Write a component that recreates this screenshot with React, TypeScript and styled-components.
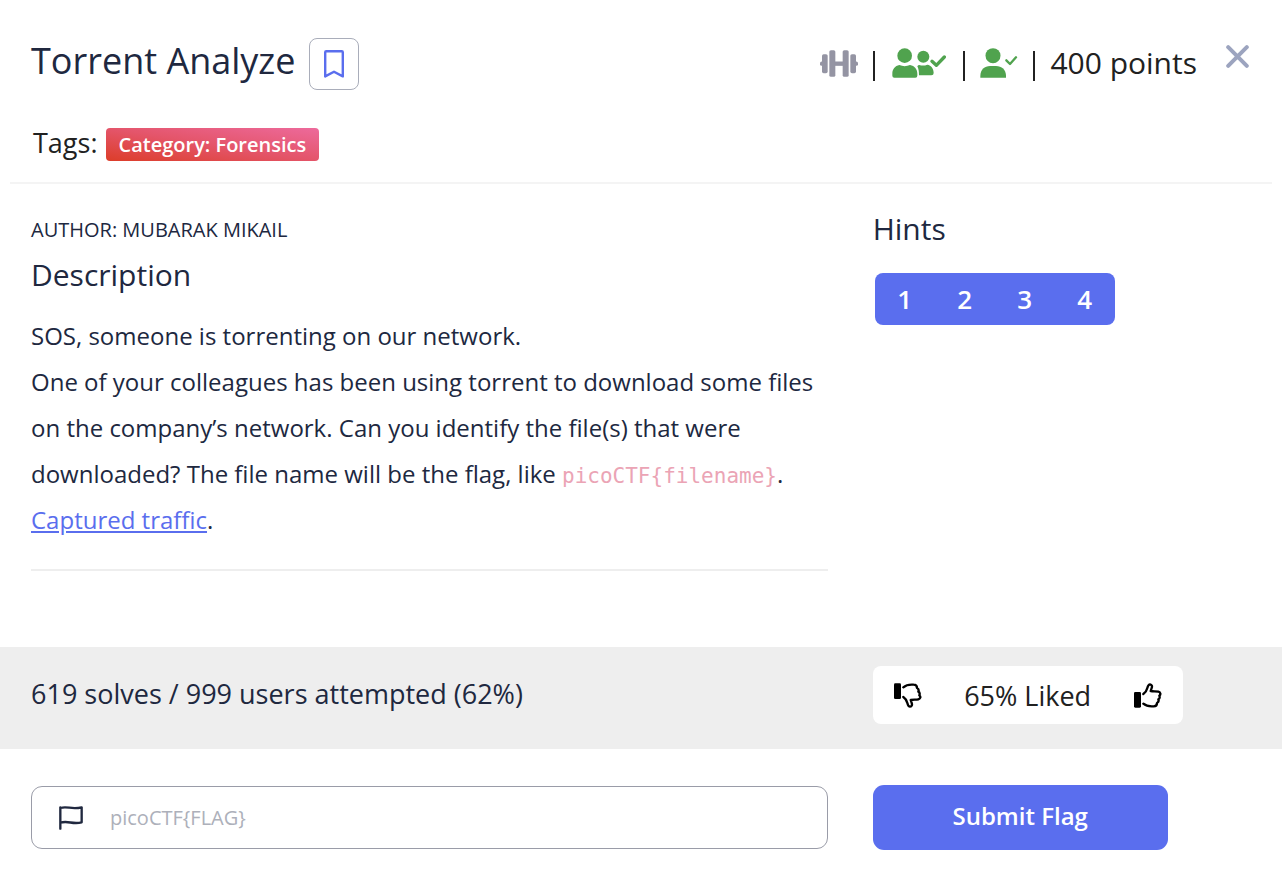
import React, { useState } from "react";
import styled, { createGlobalStyle } from "styled-components";

const color = {
  ink: "#20283f",
  text: "#212121",
  blue: "#5a6eee",
  green: "#50a34e",
  slate: "#9494a3",
  close: "#9ca4bf",
  rule: "#eeeeee",
};

const GlobalStyle = createGlobalStyle`
  *, *::before, *::after { box-sizing: border-box; }
  body {
    margin: 0;
    background: #fff;
    color: ${color.ink};
    font-family: "Open Sans", "Noto Sans", sans-serif;
    font-size: 24px;
  }
  button, input { font: inherit; }
  svg { display: block; }
`;

const Header = styled.header`
  display: flex;
  flex-direction: column;
  gap: 38px;
  margin: 0 10px;
  padding: 38px 21px 21px;
  border-bottom: 2px solid #f4f4f4;
`;

const HeaderRow = styled.div`
  display: flex;
  align-items: flex-start;
  justify-content: space-between;
`;

const TitleGroup = styled.div`
  display: flex;
  align-items: flex-start;
  gap: 14px;
`;

const Title = styled.h1`
  margin: 0;
  font-size: 36px;
  line-height: 46px;
  font-weight: 400;
`;

const BookmarkButton = styled.button`
  display: grid;
  place-items: center;
  width: 50px;
  height: 52px;
  padding: 0;
  border: 1px solid #a9adba;
  border-radius: 8px;
  background: #fff;
  cursor: pointer;
`;

const Meta = styled.div`
  display: flex;
  align-items: center;
  gap: 15px;
  color: ${color.text};
  font-size: 30px;
  line-height: 50px;
`;

const TeamStatus = styled.span`
  padding: 0 2px;
`;

const Divider = styled.span`
  width: 2px;
  height: 30px;
  margin-top: 6px;
  background: ${color.text};
`;

const CloseButton = styled.button`
  align-self: flex-start;
  display: grid;
  margin: 7px 2px 0 14px;
  padding: 0;
  border: 0;
  background: none;
  cursor: pointer;
`;

const Tags = styled.div`
  display: flex;
  align-items: flex-start;
  gap: 8px;
  padding-left: 2px;
  color: ${color.text};
  font-size: 27px;
  line-height: 30px;
`;

const Tag = styled.span`
  padding: 0 13px;
  border-radius: 4px;
  background: linear-gradient(to top right, #dc3d29, #e4556a 50%, #ed6a9c);
  color: #fff;
  font-size: 20px;
  font-weight: 600;
  line-height: 33px;
`;

const Columns = styled.div`
  display: grid;
  grid-template-columns: minmax(0, 2fr) minmax(0, 1fr);
  column-gap: 45px;
  padding: 0 11px 0 31px;
`;

const Body = styled(Columns)`
  padding-top: 25px;
  padding-bottom: 76px;
`;

const Details = styled.section`
  display: flex;
  flex-direction: column;
  padding-bottom: 26px;
  border-bottom: 2px solid ${color.rule};
`;

const Author = styled.p`
  margin: 7px 0 11px;
  font-size: 20px;
  line-height: 28px;
`;

const Heading = styled.h2`
  margin: 0;
  font-size: 30px;
  line-height: 40px;
  font-weight: 400;
`;

const Prose = styled.p`
  margin: 18px 0 0;
  line-height: 46px;
`;

const Code = styled.code`
  color: #eba4b5;
  font-family: "DejaVu Sans Mono", monospace;
  font-size: 21px;
  line-height: 1;
`;

const TextLink = styled.a`
  color: ${color.blue};
  text-decoration: underline;
`;

const HintList = styled.div`
  display: inline-flex;
  margin: 24px 0 0 2px;
  border-radius: 8px;
  overflow: hidden;
`;

const HintButton = styled.button`
  width: 60px;
  height: 52px;
  padding: 0;
  border: 0;
  background: ${color.blue};
  color: #fff;
  font-size: 26px;
  font-weight: 600;
  cursor: pointer;
`;

const Stats = styled(Columns)`
  align-items: center;
  padding-top: 19px;
  padding-bottom: 25px;
  background: ${color.rule};
  font-size: 27px;
`;

const SolveCount = styled.span`
  padding-bottom: 4px;
`;

const Rating = styled.div`
  display: flex;
  align-items: center;
  justify-content: space-between;
  width: 310px;
  max-width: 100%;
  height: 58px;
  padding: 0 21px;
  border-radius: 8px;
  background: #fff;
  color: ${color.text};
`;

const VoteButton = styled.button`
  padding: 0;
  border: 0;
  background: none;
  color: #000;
  cursor: pointer;
`;

const FlagForm = styled(Columns).attrs({ as: "form" })`
  align-items: center;
  padding-top: 36px;
  padding-bottom: 34px;
`;

const FlagField = styled.label`
  display: flex;
  align-items: center;
  gap: 27px;
  height: 63px;
  padding: 0 27px;
  border: 1px solid #9a9ca8;
  border-radius: 11px;
`;

const FlagInput = styled.input`
  flex: 1;
  min-width: 0;
  padding: 0;
  border: 0;
  outline: 0;
  background: none;
  color: ${color.ink};
  font-size: 20px;
  line-height: 28px;
  &::placeholder {
    color: #adb0ba;
    opacity: 1;
  }
`;

const SubmitButton = styled.button`
  width: 295px;
  max-width: 100%;
  height: 65px;
  padding: 0 0 4px;
  border: 0;
  border-radius: 11px;
  background: ${color.blue};
  color: #fff;
  font-size: 24px;
  font-weight: 600;
  cursor: pointer;
`;

const BookmarkIcon = () => (
  <svg width="20" height="28" viewBox="0 0 20 28" fill="none" stroke={color.blue} strokeWidth="2.4" strokeLinejoin="round" aria-hidden="true">
    <path d="M1.2 2.2Q1.2 1.2 2.2 1.2H17.8Q18.8 1.2 18.8 2.2V26.4L10 21.8L1.2 26.4Z" />
  </svg>
);

const DumbbellIcon = () => (
  <svg width="38" height="27" viewBox="0 0 114 80" fill={color.slate} aria-label="Difficulty">
    <rect x="0" y="34" width="10" height="13" rx="5" />
    <rect x="6" y="12" width="17" height="57" rx="5" />
    <rect x="28" y="0" width="18" height="80" rx="5" />
    <rect x="44" y="34" width="26" height="13" />
    <rect x="68" y="0" width="18" height="80" rx="5" />
    <rect x="91" y="12" width="17" height="57" rx="5" />
    <rect x="104" y="34" width="10" height="13" rx="5" />
  </svg>
);

const TeamIcon = () => (
  <svg width="54" height="30" viewBox="0 0 162 90" fill={color.green} aria-label="Team solves">
    <circle cx="38" cy="23" r="22" />
    <path d="M22 51Q38 58 54 51C68 53 76 64 76 77V83Q76 89 70 89H7Q1 89 1 83V77C1 64 9 53 22 51Z" />
    <circle cx="94" cy="26" r="18" />
    <path d="M76 55Q78 51 82 51Q94 55 106 50C118 52 125 62 125 75Q125 82 118 82H81Q81 64 76 55Z" />
    <path d="M120 40L133 52L157 27" fill="none" stroke={color.green} strokeWidth="10" strokeLinecap="round" strokeLinejoin="round" />
  </svg>
);

const UserIcon = () => (
  <svg width="38" height="30" viewBox="0 0 114 90" fill={color.green} aria-label="Solved">
    <circle cx="39" cy="23" r="22.5" />
    <path d="M1 89V84C1 65 14 54 30 54H48C65 54 78 65 78 84V89Z" />
    <path d="M79 37L90 48L108 28" fill="none" stroke={color.green} strokeWidth="7" strokeLinecap="round" strokeLinejoin="round" />
  </svg>
);

const CloseIcon = () => (
  <svg width="23" height="23" viewBox="0 0 23 23" stroke={color.close} strokeWidth="4" strokeLinecap="round" aria-hidden="true">
    <path d="M2.2 2.2L20.8 20.8M20.8 2.2L2.2 20.8" />
  </svg>
);

const ThumbIcon = ({ down = false }: { down?: boolean }) => (
  <svg width="28" height="25" viewBox="0 0 84 75" aria-hidden="true">
    <g transform={down ? "matrix(1 0 0 -1 0 75)" : undefined}>
      <rect x="0" y="27" width="21" height="47" rx="4" />
      <path
        d="M28 33C34 29 38 23 40 15C42 7 44 4 48 4C54 5 55 10 53 15L50 24C58 26 66 24 73 26C80 28 81 34 76 38C78 43 77 47 73 49C75 54 73 58 69 60C69 67 66 70 59 70C48 71 36 69 28 62"
        fill="none"
        stroke="currentColor"
        strokeWidth="7"
        strokeLinecap="round"
        strokeLinejoin="round"
      />
    </g>
  </svg>
);

const FlagIcon = () => (
  <svg width="24" height="24" viewBox="0 0 72 72" fill="none" stroke={color.ink} strokeWidth="7" strokeLinecap="round" strokeLinejoin="round" aria-hidden="true">
    <path d="M4 68V4M4 6C26-1 36 12 68 4V49C40 56 28 43 4 50" />
  </svg>
);

export default function App() {
  const [flag, setFlag] = useState("");

  return (
    <>
      <GlobalStyle />
      <main>
        <Header>
          <HeaderRow>
            <TitleGroup>
              <Title>Torrent Analyze</Title>
              <BookmarkButton aria-label="Bookmark">
                <BookmarkIcon />
              </BookmarkButton>
            </TitleGroup>
            <Meta>
              <DumbbellIcon />
              <Divider />
              <TeamStatus>
                <TeamIcon />
              </TeamStatus>
              <Divider />
              <UserIcon />
              <Divider />
              <span>400 points</span>
              <CloseButton aria-label="Close">
                <CloseIcon />
              </CloseButton>
            </Meta>
          </HeaderRow>
          <Tags>
            Tags: <Tag>Category: Forensics</Tag>
          </Tags>
        </Header>

        <Body>
          <Details>
            <Author>AUTHOR: MUBARAK MIKAIL</Author>
            <Heading>Description</Heading>
            <Prose>
              SOS, someone is torrenting on our network.
              <br />
              One of your colleagues has been using torrent to download some files on the company’s
              network. Can you identify the file(s) that were downloaded? The file name will be the
              flag, like <Code>{"picoCTF{filename}"}</Code>.
              <br />
              <TextLink href="#captured-traffic">Captured traffic</TextLink>.
            </Prose>
          </Details>
          <section>
            <Heading>Hints</Heading>
            <HintList>
              {[1, 2, 3, 4].map((n) => (
                <HintButton key={n}>{n}</HintButton>
              ))}
            </HintList>
          </section>
        </Body>

        <Stats>
          <SolveCount>619 solves / 999 users attempted (62%)</SolveCount>
          <Rating>
            <VoteButton aria-label="Dislike">
              <ThumbIcon down />
            </VoteButton>
            <span>65% Liked</span>
            <VoteButton aria-label="Like">
              <ThumbIcon />
            </VoteButton>
          </Rating>
        </Stats>

        <FlagForm onSubmit={(e: React.FormEvent) => e.preventDefault()}>
          <FlagField>
            <FlagIcon />
            <FlagInput
              aria-label="Flag"
              placeholder="picoCTF{FLAG}"
              value={flag}
              onChange={(e) => setFlag(e.target.value)}
            />
          </FlagField>
          <SubmitButton type="submit">Submit Flag</SubmitButton>
        </FlagForm>
      </main>
    </>
  );
}
